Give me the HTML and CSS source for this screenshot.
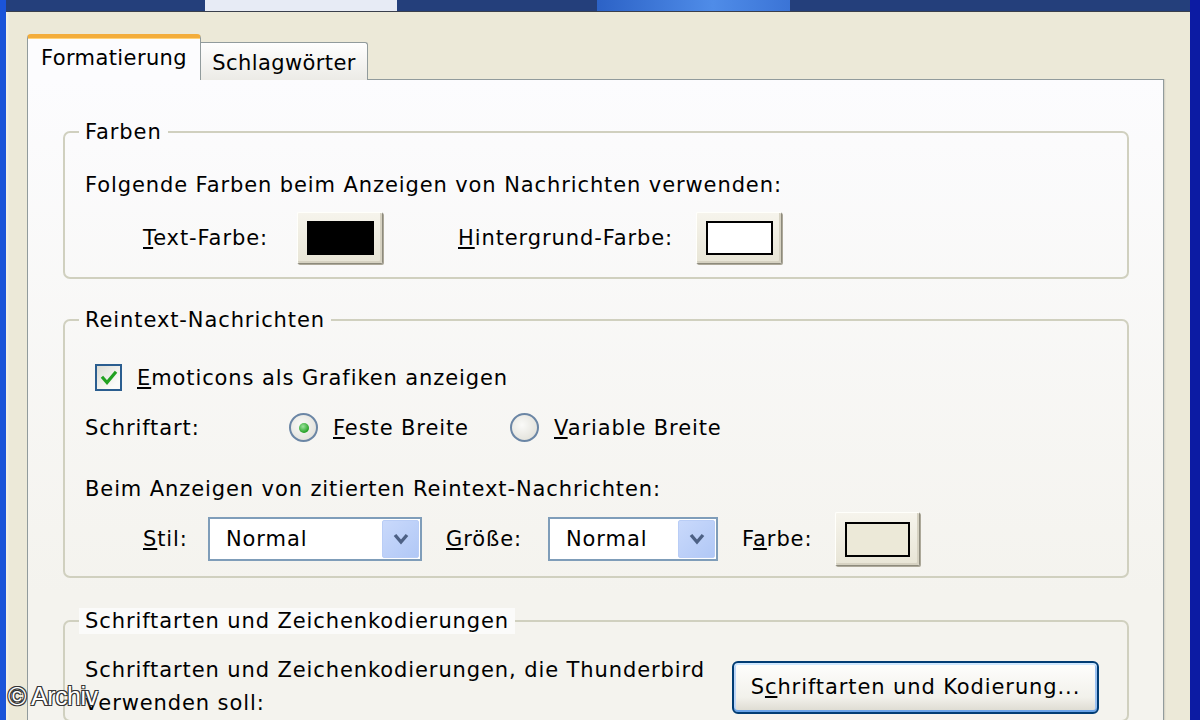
FILE: index.html
```html
<!DOCTYPE html>
<html lang="de">
<head>
  <meta charset="UTF-8">
  <title>Thunderbird – Formatierung</title>
  <link rel="stylesheet" href="styles.css">
</head>
<body>
  <div class="screen">
    <!-- Fensterleiste oben, nur der untere Rand ist sichtbar -->
    <div class="titlebar">
      <span class="seg seg-a"></span>
      <span class="seg seg-b"></span>
      <span class="seg seg-c"></span>
      <span class="seg seg-d"></span>
      <span class="seg seg-e"></span>
    </div>

    <div class="window">
      <div class="tabs">
        <div class="tab tab-active">Formatierung</div>
        <div class="tab">Schlagwörter</div>
      </div>

      <div class="tab-panel">
        <fieldset class="group group-colors">
          <legend>Farben</legend>
          <p class="line">Folgende Farben beim Anzeigen von Nachrichten verwenden:</p>
          <div class="row row-colors">
            <span class="lbl lbl-text"><u>T</u>ext-Farbe:</span>
            <button class="color-btn"><span class="swatch swatch-black"></span></button>
            <span class="lbl lbl-bg"><u>H</u>intergrund-Farbe:</span>
            <button class="color-btn"><span class="swatch swatch-white"></span></button>
          </div>
        </fieldset>

        <fieldset class="group group-plain">
          <legend>Reintext-Nachrichten</legend>
          <div class="row row-check">
            <span class="checkbox">
              <svg width="22" height="22" viewBox="0 0 22 22"><path d="M5 11 L9 15.5 L17 6" fill="none" stroke="#21a121" stroke-width="3.2" stroke-linecap="square"/></svg>
            </span>
            <span class="lbl"><u>E</u>moticons als Grafiken anzeigen</span>
          </div>
          <div class="row row-radio">
            <span class="lbl lbl-font">Schriftart:</span>
            <span class="radio-opt radio-first">
              <span class="radio radio-on"></span>
              <span class="lbl"><u>F</u>este Breite</span>
            </span>
            <span class="radio-opt">
              <span class="radio"></span>
              <span class="lbl"><u>V</u>ariable Breite</span>
            </span>
          </div>
          <p class="line line-quoted">Beim Anzeigen von zitierten Reintext-Nachrichten:</p>
          <div class="row row-quoted">
            <span class="lbl lbl-stil"><u>S</u>til:</span>
            <span class="select select-wide">
              <span class="select-value">Normal</span>
              <span class="select-arrow">
                <svg width="18" height="14" viewBox="0 0 18 14"><path d="M3 3 L9 10 L15 3" fill="none" stroke="#4d6185" stroke-width="3.4"/></svg>
              </span>
            </span>
            <span class="lbl lbl-size"><u>G</u>röße:</span>
            <span class="select select-narrow">
              <span class="select-value">Normal</span>
              <span class="select-arrow">
                <svg width="18" height="14" viewBox="0 0 18 14"><path d="M3 3 L9 10 L15 3" fill="none" stroke="#4d6185" stroke-width="3.4"/></svg>
              </span>
            </span>
            <span class="lbl lbl-color">F<u>a</u>rbe:</span>
            <button class="color-btn color-btn-tall"><span class="swatch swatch-beige"></span></button>
          </div>
        </fieldset>

        <fieldset class="group group-fonts">
          <legend>Schriftarten und Zeichenkodierungen</legend>
          <div class="row row-fonts">
            <p class="fonts-text">Schriftarten und Zeichenkodierungen, die Thunderbird verwenden soll:</p>
            <button class="xp-btn">S<u>c</u>hriftarten und Kodierung...</button>
          </div>
        </fieldset>
      </div>
    </div>

    <div class="watermark">© Archiv</div>
  </div>
</body>
</html>
```

FILE: styles.css
```css
:root {
  --xp-face: #ece9d8;
  --xp-border: #919b9c;
  --group-border: #d0d0bf;
  --text: #000;
}

* {
  box-sizing: border-box;
  margin: 0;
  padding: 0;
}

body {
  font-family: 'DejaVu Sans', 'Liberation Sans', sans-serif;
  font-size: 21px;
  letter-spacing: 0.9px;
  color: var(--text);
  background: var(--xp-face);
  overflow: hidden;
}

.screen {
  position: relative;
  height: 720px;
  display: flex;
  flex-direction: column;
  border-left: 6px solid #1b54d9;
  border-right: 10px solid #0c1ba3;
  overflow: hidden;
}

/* obere Leiste */
.titlebar {
  display: flex;
  height: 12px;
  flex-shrink: 0;
  border-bottom: 1px solid #3a3f4c;
}

.seg {
  display: block;
  height: 100%;
  background: #243f7b;
}

.seg-a { width: 199px; }
.seg-b { width: 192px; background: #e7ebf5; }
.seg-c { width: 200px; }
.seg-d { width: 193px; background: linear-gradient(90deg, #2c62c6, #4f8ce8 60%, #3b74d6); }
.seg-e { flex: 1; }

.window {
  flex: 1;
  display: flex;
  flex-direction: column;
  padding: 22px 0 0 21px;
  background: linear-gradient(90deg, #f5f3ea 0, var(--xp-face) 4px);
}

/* Reiter */
.tabs {
  display: flex;
  align-items: flex-end;
  height: 46px;
  position: relative;
  z-index: 2;
  margin-bottom: -1px;
}

.tab {
  width: 167px;
  height: 38px;
  display: flex;
  align-items: center;
  justify-content: center;
  background: linear-gradient(#fefefe, #ecebe6);
  border: 1px solid var(--xp-border);
  border-bottom: none;
  border-left: none;
  border-radius: 0 3px 0 0;
  padding-top: 2px;
  letter-spacing: 0.4px;
}

.tab-active {
  width: 174px;
  height: 46px;
  background: #fcfcfe;
  border-left: 1px solid var(--xp-border);
  border-top: 4px solid #f3ad3c;
  box-shadow: inset 0 1px 0 #ffd27a;
  border-radius: 4px 4px 0 0;
  padding-top: 0;
  padding-bottom: 2px;
}

.tab-panel {
  width: 1137px;
  flex: 1;
  background: linear-gradient(#fcfcfe, #f4f3ee 80%);
  border: 1px solid var(--xp-border);
  box-shadow: 1px 0 0 #d6d3c5, 2px 0 0 #e6e3d3;
  padding: 39px 34px 0 35px;
}

/* Gruppenrahmen */
.group {
  border: 2px solid var(--group-border);
  border-radius: 7px;
  padding: 0 20px 13px 20px;
}

.group legend {
  line-height: 26px;
  padding: 0 6px;
  margin-left: -6px;
}

.group-plain {
  margin-top: 28px;
  padding-bottom: 10px;
}

.group-fonts {
  margin-top: 30px;
  padding-bottom: 0;
}

.group-fonts legend {
  background: #fbfbfa;
}

.line {
  line-height: 26px;
  margin-top: 27px;
}

.row {
  display: flex;
  align-items: center;
}

.lbl {
  white-space: nowrap;
  line-height: 26px;
}

.row-colors {
  margin-top: 14px;
  padding-left: 58px;
}

.lbl-text { width: 154px; }
.lbl-bg { width: 238px; margin-left: 75px; }

/* Farbknopf */
.color-btn {
  width: 86px;
  height: 52px;
  display: flex;
  align-items: center;
  justify-content: center;
  background: linear-gradient(#f6f4ec, #e8e5d6);
  border: 1px solid;
  border-color: #fffffb #8d8a7c #8d8a7c #fffffb;
  box-shadow: 1px 1px 0 #aca899, inset -2px -2px 0 #d6d2c2;
  border-radius: 2px;
}

.color-btn-tall {
  width: 85px;
  height: 54px;
}

.swatch {
  display: block;
  width: 67px;
  height: 34px;
  border: 2px solid #000;
}

.swatch-black { background: #000; }
.swatch-white { background: #fff; }
.swatch-beige { width: 65px; height: 35px; background: #ece9d8; }

/* Checkbox und Radio */
.row-check {
  margin-top: 31px;
  padding-left: 10px;
  gap: 15px;
}

.checkbox {
  width: 27px;
  height: 27px;
  display: flex;
  align-items: center;
  justify-content: center;
  border: 2px solid #2a5d8f;
  background: linear-gradient(135deg, #dcdcd5, #fbfbf9 80%);
}

.row-radio {
  margin-top: 22px;
}

.lbl-font { width: 204px; }

.radio-opt {
  display: flex;
  align-items: center;
  gap: 15px;
}

.radio-first { width: 221px; }

.radio {
  width: 29px;
  height: 29px;
  border-radius: 50%;
  border: 2px solid #6b86a5;
  background: radial-gradient(circle at 40% 40%, #fafaf8, #dcdbd3);
  display: flex;
  align-items: center;
  justify-content: center;
}

.radio-on::after {
  content: '';
  width: 10px;
  height: 10px;
  border-radius: 50%;
  background: radial-gradient(circle at 40% 35%, #9be39b, #25a125 70%);
}

.line-quoted {
  margin-top: 34px;
}

/* Auswahlfelder */
.row-quoted {
  margin-top: 10px;
  padding-left: 58px;
}

.lbl-stil { width: 65px; }
.lbl-size { width: 102px; margin-left: 24px; }
.lbl-color { width: 93px; margin-left: 24px; }

.select {
  height: 44px;
  display: flex;
  align-items: center;
  justify-content: space-between;
  background: #fff;
  border: 2px solid #7f9db9;
  padding: 1px 1px 1px 16px;
}

.select-wide { width: 214px; }
.select-narrow { width: 170px; }

.select-arrow {
  width: 37px;
  height: 100%;
  display: flex;
  align-items: center;
  justify-content: center;
  background: linear-gradient(135deg, #c9d9fb, #b1c8f6);
  border: 1px solid #b9cdf6;
  border-radius: 2px;
}

/* Schriftarten */
.row-fonts {
  margin-top: 20px;
  justify-content: space-between;
  height: 66px;
}

.fonts-text {
  width: 640px;
  line-height: 33px;
}

.xp-btn {
  width: 367px;
  height: 53px;
  margin-right: 8px;
  font: inherit;
  letter-spacing: inherit;
  color: var(--text);
  background: linear-gradient(#fefefd, #f2f1eb 70%, #dcdad0);
  border: 2px solid #003c74;
  border-radius: 6px;
  box-shadow: inset 0 2px 0 #cee7ff, inset 0 -2px 0 #69a3e8, inset 2px 0 0 #bdd6f7, inset -2px 0 0 #9bc1f0;
}

.watermark {
  position: absolute;
  left: 2px;
  top: 682px;
  font-family: 'Liberation Sans Narrow', 'Liberation Sans', sans-serif;
  font-size: 25px;
  color: #fff;
  letter-spacing: -0.5px;
  text-shadow: 1px 1px 0 #333, -1px -1px 0 #333, 1px -1px 0 #333, -1px 1px 0 #333;
}
```
